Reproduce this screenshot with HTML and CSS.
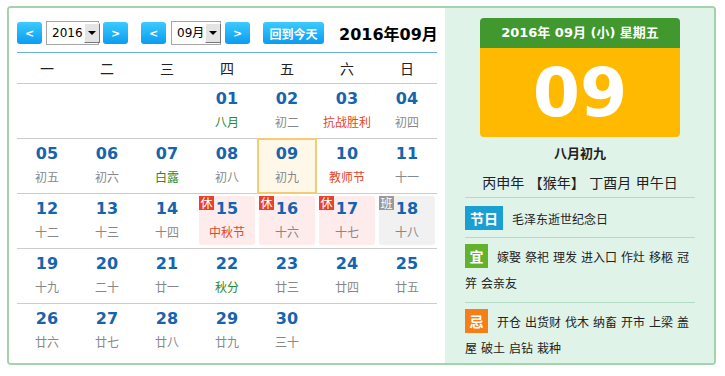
FILE: index.html
```html
<!DOCTYPE html>
<html lang="zh-CN">
<head>
  <meta charset="UTF-8" />
  <title>万年历</title>
  <link rel="stylesheet" href="styles.css">
</head>
<body>
  <div class="calendar">
    <div class="main">
      <div class="toolbar">
        <div class="btn">&lt;</div>
        <div class="select year"><span>2016</span><i class="arrow"></i></div>
        <div class="btn">&gt;</div>
        <div class="btn gap">&lt;</div>
        <div class="select month"><span>09月</span><i class="arrow"></i></div>
        <div class="btn">&gt;</div>
        <div class="btn today-btn">回到今天</div>
        <div class="title">2016年09月</div>
      </div>

      <div class="week">
        <div>一</div><div>二</div><div>三</div><div>四</div><div>五</div><div>六</div><div>日</div>
      </div>

      <div class="row">
        <div class="cell"></div>
        <div class="cell"></div>
        <div class="cell"></div>
        <div class="cell"><span class="num">01</span><span class="lunar term">八月</span></div>
        <div class="cell"><span class="num">02</span><span class="lunar">初二</span></div>
        <div class="cell"><span class="num">03</span><span class="lunar fest">抗战胜利</span></div>
        <div class="cell"><span class="num">04</span><span class="lunar">初四</span></div>
      </div>
      <div class="row">
        <div class="cell"><span class="num">05</span><span class="lunar">初五</span></div>
        <div class="cell"><span class="num">06</span><span class="lunar">初六</span></div>
        <div class="cell"><span class="num">07</span><span class="lunar term">白露</span></div>
        <div class="cell"><span class="num">08</span><span class="lunar">初八</span></div>
        <div class="cell today"><span class="num">09</span><span class="lunar">初九</span></div>
        <div class="cell"><span class="num">10</span><span class="lunar fest">教师节</span></div>
        <div class="cell"><span class="num">11</span><span class="lunar">十一</span></div>
      </div>
      <div class="row">
        <div class="cell"><span class="num">12</span><span class="lunar">十二</span></div>
        <div class="cell"><span class="num">13</span><span class="lunar">十三</span></div>
        <div class="cell"><span class="num">14</span><span class="lunar">十四</span></div>
        <div class="cell rest"><b class="mark">休</b><span class="num">15</span><span class="lunar fest">中秋节</span></div>
        <div class="cell rest"><b class="mark">休</b><span class="num">16</span><span class="lunar">十六</span></div>
        <div class="cell rest"><b class="mark">休</b><span class="num">17</span><span class="lunar">十七</span></div>
        <div class="cell work"><b class="mark">班</b><span class="num">18</span><span class="lunar">十八</span></div>
      </div>
      <div class="row">
        <div class="cell"><span class="num">19</span><span class="lunar">十九</span></div>
        <div class="cell"><span class="num">20</span><span class="lunar">二十</span></div>
        <div class="cell"><span class="num">21</span><span class="lunar">廿一</span></div>
        <div class="cell"><span class="num">22</span><span class="lunar term">秋分</span></div>
        <div class="cell"><span class="num">23</span><span class="lunar">廿三</span></div>
        <div class="cell"><span class="num">24</span><span class="lunar">廿四</span></div>
        <div class="cell"><span class="num">25</span><span class="lunar">廿五</span></div>
      </div>
      <div class="row">
        <div class="cell"><span class="num">26</span><span class="lunar">廿六</span></div>
        <div class="cell"><span class="num">27</span><span class="lunar">廿七</span></div>
        <div class="cell"><span class="num">28</span><span class="lunar">廿八</span></div>
        <div class="cell"><span class="num">29</span><span class="lunar">廿九</span></div>
        <div class="cell"><span class="num">30</span><span class="lunar">三十</span></div>
        <div class="cell"></div>
        <div class="cell"></div>
      </div>
    </div>

    <div class="side">
      <div class="card">
        <div class="card-head">2016年 09月 (小) 星期五</div>
        <div class="card-day">09</div>
      </div>
      <div class="lunar-date">八月初九</div>
      <div class="ganzhi">丙申年 【猴年】 丁酉月 甲午日</div>
      <div class="festival"><span class="tag jr">节日</span>毛泽东逝世纪念日</div>
      <div class="advice"><span class="tag yi">宜</span>嫁娶 祭祀 理发 进入口 作灶 移柩 冠笄 会亲友</div>
      <div class="advice"><span class="tag ji">忌</span>开仓 出货财 伐木 纳畜 开市 上梁 盖屋 破土 启钻 栽种</div>
    </div>
  </div>
</body>
</html>
```

FILE: styles.css
```css
* {
  box-sizing: border-box;
}
body {
  margin: 0;
  background: #fff;
  font-family: "Noto Sans CJK SC", sans-serif;
  color: #222;
}
.calendar {
  display: flex;
  width: 709px;
  height: 359px;
  margin: 6px 0 0 7px;
  border: 2px solid #a3d3ab;
  border-radius: 4px;
  overflow: hidden;
}
.main {
  width: 436px;
  background: #fff;
  padding: 14px 8px 0;
}
.toolbar {
  display: flex;
  align-items: center;
  height: 31px;
  padding-bottom: 8px;
  border-bottom: 1px solid #6aaee0;
}
.toolbar > * {
  flex-shrink: 0;
  white-space: nowrap;
}
.btn {
  width: 25px;
  height: 22px;
  display: flex;
  align-items: center;
  justify-content: center;
  border-radius: 3px;
  background: linear-gradient(#3ccaff, #0a9cf0);
  color: #fff;
  font: bold 11px "DejaVu Sans", sans-serif;
  margin-left: 4px;
}
.btn:first-child {
  margin-left: 0;
}
.btn.gap {
  margin-left: 13px;
}
.today-btn {
  width: 61px;
  margin-left: 13px;
  font: bold 12px "Noto Sans CJK SC", sans-serif;
}
.select {
  display: flex;
  align-items: stretch;
  height: 24px;
  margin-left: 4px;
  border: 1px solid #a5a5a5;
  background: #fff;
  font: 12px "DejaVu Sans", "Noto Sans CJK SC", sans-serif;
  color: #000;
}
.select span {
  flex: 1;
  padding-left: 5px;
  line-height: 22px;
}
.year {
  width: 53px;
}
.month {
  width: 50px;
  margin-left: 5px;
}
.arrow {
  flex: 0 0 16px;
  margin: 1px;
  background: #e4e4e4;
  border-left: 1px solid #fff;
  border-top: 1px solid #fff;
  border-right: 1px solid #777;
  border-bottom: 1px solid #777;
  position: relative;
}
.arrow::after {
  content: "";
  position: absolute;
  left: 3px;
  top: 7px;
  border-left: 4px solid transparent;
  border-right: 4px solid transparent;
  border-top: 4px solid #000;
}
.title {
  margin-left: 15px;
  font: bold 16px "DejaVu Sans", "Noto Sans CJK SC", sans-serif;
  color: #000;
}
.week {
  display: grid;
  grid-template-columns: repeat(7, 60px);
  height: 31px;
  border-bottom: 1px solid #ccc;
  font-size: 14px;
  line-height: 30px;
  text-align: center;
  color: #222;
}
.row {
  display: grid;
  grid-template-columns: repeat(7, 60px);
  height: 55px;
  border-bottom: 1px solid #ccc;
}
.row:last-child {
  border-bottom: none;
}
.cell {
  position: relative;
  margin: 2px 2px 3px;
  padding-top: 3px;
  border-radius: 3px;
  text-align: center;
}
.num {
  display: block;
  font: bold 16px/20px "DejaVu Sans", sans-serif;
  color: #1764ae;
}
.lunar {
  display: block;
  margin-top: 4px;
  font-size: 12px;
  line-height: 18px;
  color: #888;
}
.lunar.term {
  color: #2b8a2b;
}
.lunar.fest {
  color: #e8442c;
}
.today {
  margin: -1px 0;
  padding-top: 4px;
  border: 2px solid #f2cd75;
  border-radius: 0;
  background: #fff8e9;
}
.rest {
  background: #fdeceb;
}
.work {
  background: #f1f1f1;
}
.mark {
  position: absolute;
  top: 0;
  left: 0;
  width: 15px;
  height: 14px;
  font-size: 12px;
  font-weight: normal;
  line-height: 14px;
  color: #fff;
  background: #e8412c;
}
.work .mark {
  background: #999;
}
.side {
  flex: 1;
  background: #e0f3e8;
  padding: 10px 19px 0 20px;
  word-spacing: 1.3px;
}
.card {
  width: 200px;
  margin: 0 auto;
  border-radius: 4px;
  overflow: hidden;
  text-align: center;
  color: #fff;
  word-spacing: 0;
}
.card-head {
  height: 30px;
  background: #40982f;
  font: bold 13px/30px "DejaVu Sans", "Noto Sans CJK SC", sans-serif;
}
.card-day {
  height: 89px;
  background: #ffba00;
  font: bold 68px/89px "DejaVu Sans", sans-serif;
}
.lunar-date {
  margin-top: 6px;
  text-align: center;
  font-size: 13px;
  font-weight: bold;
  line-height: 20px;
}
.ganzhi {
  margin-top: 9px;
  margin-bottom: 5px;
  text-align: center;
  font-size: 14px;
  line-height: 20px;
}
.festival {
  display: flex;
  align-items: center;
  padding: 8px 0 7px;
  border-top: 1px solid #b6dbc4;
  font-size: 12px;
}
.advice {
  padding: 6px 0;
  border-top: 1px solid #b6dbc4;
  font-size: 12px;
  line-height: 26px;
}
.tag {
  display: inline-block;
  height: 24px;
  width: 23px;
  margin-right: 9px;
  text-align: center;
  vertical-align: top;
  font-size: 14px;
  font-weight: bold;
  line-height: 24px;
  color: #fff;
}
.tag.jr {
  width: 38px;
  background: #1a9fd3;
}
.tag.yi {
  background: #63b22a;
}
.tag.ji {
  background: #f57f17;
}
```
